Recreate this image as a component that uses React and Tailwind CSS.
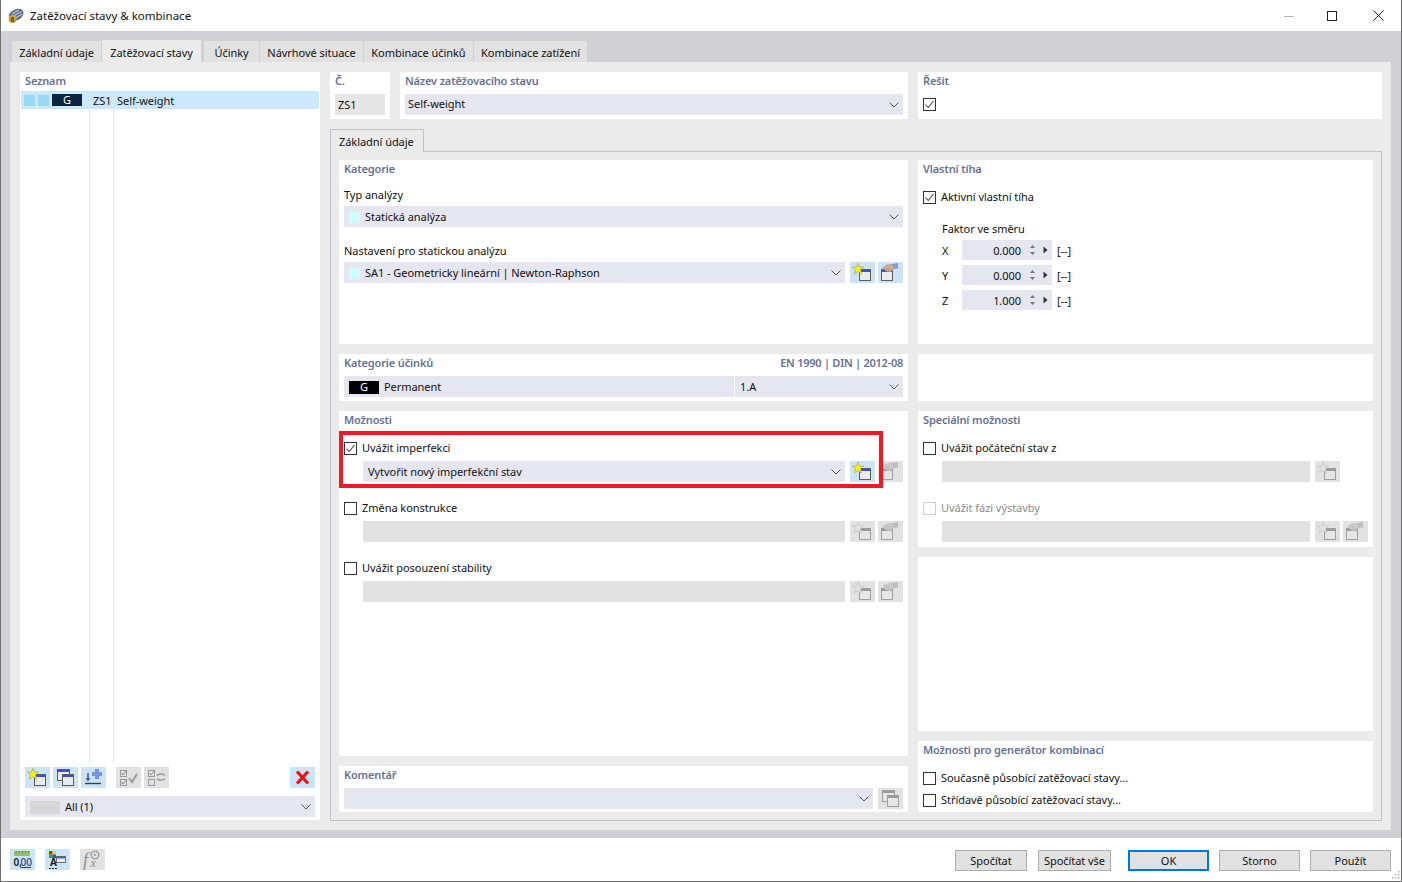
import React from "react";

const Chevron = ({ c = "#555" }) => (
  <svg width="10" height="6" viewBox="0 0 10 6" className="shrink-0"><path d="M0.5 0.5 L5 5 L9.5 0.5" fill="none" stroke={c} strokeWidth="1" /></svg>
);

const Star = ({ x = 8, y = 7 }) => (
  <polygon transform={`translate(${x} ${y}) scale(1.15)`} points="0,-5 1.4,-1.6 5,-1.6 2.2,0.7 3.2,4.4 0,2.2 -3.2,4.4 -2.2,0.7 -5,-1.6 -1.4,-1.6" fill="#fff200" stroke="#9a9a70" strokeWidth="0.5" />
);
const Win = ({ x, y, w = 11, h = 11 }) => (
  <g>
    <rect x={x + 0.5} y={y + 0.5} width={w} height={h} fill="#ebebeb" stroke="#5c5c5c" />
    <rect x={x + 1} y={y + 1} width={w - 1} height="2" fill="#3f51c4" />
  </g>
);
const NewIcon = () => (
  <svg width="25" height="21" viewBox="0 0 25 21"><Win x={9} y={7} /><Star /></svg>
);
const EditIcon = () => (
  <svg width="25" height="21" viewBox="0 0 25 21">
    <Win x={3} y={7} />
    <path d="M14 2 L20 1 L20 6.5 L15 7 Z" fill="#7aa2dc" />
    <path d="M5 5.5 C7 3.5 10 2.5 13 2.5 L16 3.5 L16 6 L14.5 8 L12.5 10 L10.5 9.5 L9.5 10 L8 8.5 L6.5 8 Z" fill="#d3ab92" stroke="#a07f6a" strokeWidth="0.5" />
    <path d="M8 6.5 L11 6 M9.5 8 L12.5 7.5" stroke="#a07f6a" strokeWidth="0.5" />
  </svg>
);
const CopyIcon = () => (
  <svg width="25" height="21" viewBox="0 0 25 21"><Win x={4} y={2} w={12} h={11} /><Win x={9} y={7} w={11} h={11} /></svg>
);
const ImportIcon = () => (
  <svg width="25" height="21" viewBox="0 0 25 21">
    <path d="M4 16.5 H20" stroke="#3a3f55" strokeWidth="1.4" />
    <path d="M7 6 V13" stroke="#3c5fc0" strokeWidth="1.6" />
    <path d="M4.5 11 L7 14.5 L9.5 11 Z" fill="#3c5fc0" />
    <path d="M14 2 H18 V5 H21 V9 H18 V12 H14 V9 H11 V5 H14 Z" fill="#7494e8" />
  </svg>
);
const CheckAllIcon = () => (
  <svg width="25" height="21" viewBox="0 0 25 21" className="opacity-80">
    <rect x="4.5" y="3.5" width="6" height="6" fill="none" stroke="#8a8a8a" />
    <rect x="4.5" y="12.5" width="6" height="6" fill="none" stroke="#8a8a8a" />
    <path d="M5.5 6 L7 8 L11 3 M5.5 15 L7 17 L11 12" fill="none" stroke="#777" />
    <path d="M13 11 L16 15 L21 7" fill="none" stroke="#8a8a8a" strokeWidth="2" />
  </svg>
);
const CheckSwapIcon = () => (
  <svg width="25" height="21" viewBox="0 0 25 21" className="opacity-80">
    <rect x="4.5" y="3.5" width="6" height="6" fill="none" stroke="#8a8a8a" />
    <rect x="4.5" y="12.5" width="6" height="6" fill="none" stroke="#8a8a8a" />
    <path d="M5.5 6 L7 8 L11 3" fill="none" stroke="#777" />
    <path d="M13 9 C15 6 18 6 21 8.5 M13 12 C16 14 18 14 21 11.5" fill="none" stroke="#8a8a8a" strokeWidth="1.6" />
  </svg>
);
const XIcon = () => (
  <svg width="25" height="21" viewBox="0 0 25 21"><path d="M7 4.5 L18 16.5 M18 4.5 L7 16.5" stroke="#ee1111" strokeWidth="3.2" /></svg>
);
const RulerIcon = () => (
  <svg width="25" height="21" viewBox="0 0 25 21">
    <rect x="4" y="2" width="16" height="5" fill="#93c063" />
    <path d="M6.5 2V4M9.5 2V4M12.5 2V4M15.5 2V4M18.5 2V4" stroke="#6f9c4c" />
    <text x="3.5" y="16.5" fontSize="10" fontWeight="600" fill="#222" fontFamily="Noto Sans, sans-serif">0,</text>
    <text x="10.5" y="16.5" fontSize="10" fontWeight="500" fill="#2a3a90" fontFamily="Noto Sans, sans-serif">00</text>
    <path d="M10.5 18.5H21" stroke="#2a3a90" />
  </svg>
);
const ColorIcon = () => (
  <svg width="25" height="21" viewBox="0 0 25 21">
    <rect x="4" y="2" width="3.5" height="3.5" fill="#e02020" />
    <rect x="7.5" y="2" width="3.5" height="3.5" fill="#e6d820" />
    <rect x="4" y="5.5" width="3.5" height="3.5" fill="#30a040" />
    <rect x="7.5" y="5.5" width="3.5" height="3.5" fill="#3050d0" />
    <text x="5" y="17" fontSize="10" fontWeight="700" fill="#222" fontFamily="Noto Sans, sans-serif">A</text>
    <path d="M4 19.5H6M7 19.5H9M10 19.5H12" stroke="#222" />
    <rect x="11.5" y="7.5" width="9" height="6" fill="#eee" stroke="#667" />
    <rect x="12" y="8" width="8" height="1.5" fill="#4a60c8" />
  </svg>
);
const FxIcon = () => (
  <svg width="25" height="21" viewBox="0 0 25 21">
    <text x="3" y="17" fontSize="18" fontStyle="italic" fill="#8f8f8f" fontFamily="Liberation Serif, serif">f</text>
    <text x="10.5" y="18" fontSize="12" fontStyle="italic" fill="#8f8f8f" fontFamily="Liberation Serif, serif">x</text>
    <circle cx="15" cy="6" r="3.8" fill="none" stroke="#8f8f8f" strokeWidth="1.4" strokeDasharray="2 0.6" />
    <circle cx="15" cy="6" r="1" fill="#8f8f8f" />
  </svg>
);
const AppIcon = () => (
  <svg width="16" height="16" viewBox="0 0 16 16" className="shrink-0">
    <path d="M1 7 C2 4 6 1.5 10 0.8 C13 0.5 15.5 2 15.5 5 C15.5 8 13 10.5 10 12 L5 13 C2 12.5 0.5 10 1 7 Z" fill="#5a6a80" />
    <path d="M4 6 L11 2 M5.5 8 L13.5 3.5 M7.5 10 L14.5 6" stroke="#c3cedd" strokeWidth="1.1" />
    <circle cx="4.5" cy="11" r="4" fill="#d8aa2e" />
    <text x="2.6" y="13.6" fontSize="7" fontWeight="700" fill="#4a3a10" fontFamily="Liberation Sans, sans-serif">6</text>
  </svg>
);

const Btn = ({ children, off, cls = "" }) => (
  <div className={`w-[25px] h-[21px] shrink-0 flex items-center justify-center ${off ? "bg-[#e2e2e2]" : "bg-[#cce4f7]"} ${cls}`}>
    <div className={off ? "grayscale opacity-50 flex" : "flex"}>{children}</div>
  </div>
);

const Combo = ({ children, cls = "", off }) => (
  <div className={`h-[21px] flex items-center ${off ? "bg-[#e2e2e2]" : "bg-[#e6e6f0]"} ${cls}`}>
    <div className="flex-1 min-w-0 flex items-center h-full pt-px">{children}</div>
    {!off && <div className="w-[21px] flex justify-start pl-[7px]"><Chevron /></div>}
  </div>
);

const Title = ({ children, right }) => (
  <div className="h-[18px] leading-[18px] px-[5px] flex justify-between text-[#667097] font-semibold tracking-[-0.15px]">
    <span>{children}</span>
    {right && <span className="tracking-[-0.25px]">{right}</span>}
  </div>
);

const Check = ({ checked, off }) => (
  <div className={`w-[13px] h-[13px] border shrink-0 flex items-center justify-center bg-white ${off ? "border-[#cfcfcf]" : "border-[#333]"}`}>
    {checked && <svg width="11" height="11" viewBox="0 0 11 11"><path d="M1.5 5.5 L4.2 8.5 L9.5 2" fill="none" stroke="#444" strokeWidth="1.1" /></svg>}
  </div>
);

const CheckRow = ({ children, checked, off, cls = "" }) => (
  <div className={`h-[16px] flex items-center gap-[5px] pl-[5px] ${cls}`}>
    <Check checked={checked} off={off} />
    <span className={off ? "text-[#8c8c8c]" : ""}>{children}</span>
  </div>
);

const Spin = ({ axis, value }) => (
  <div className="flex items-center h-[20px] pl-[24px]">
    <span className="w-[20px] pt-[2px]">{axis}</span>
    <div className="w-[90px] h-[20px] bg-[#e6e6f0] flex items-center justify-end">
      <span className="mr-[8px] pt-[2px]">{value}</span>
      <svg width="7" height="12" viewBox="0 0 7 12" className="mr-[7px]"><path d="M3.5 1 L6 4 H1 Z M3.5 11 L1 8 H6 Z" fill="#777" /></svg>
      <svg width="5" height="8" viewBox="0 0 5 8" className="mr-[4px]"><path d="M0.5 0.5 L4.5 4 L0.5 7.5 Z" fill="#333" /></svg>
    </div>
    <span className="ml-[5px] pt-[2px]">[--]</span>
  </div>
);

const Tab = ({ children, w, active }) => (
  <div className={`text-center ${w} ${active ? "h-[22px] bg-[#ebebeb] leading-[26px]" : "h-[21px] bg-[#e1e1e1] leading-[24px] border-r border-[#d0d0d4]"}`}>{children}</div>
);

const FootBtn = ({ children, w, cls = "", primary }) => (
  <div className={`${w} h-[21px] flex items-center justify-center pt-px bg-[#e1e1e1] ${primary ? "border-2 border-[#0078d7]" : "border border-[#adadad]"} ${cls}`}>{children}</div>
);

export default function App() {
  return (
    <div className="w-[1402px] h-[882px] flex flex-col bg-white border-l border-r border-b border-[#6e6e6e] relative overflow-hidden text-[#111] text-[11px] tracking-[-0.05px] [font-family:'Noto_Sans',sans-serif]">
      {/* Title bar */}
      <div className="h-[31px] shrink-0 flex items-center pl-[7px]">
        <AppIcon />
        <span className="ml-[6px] text-[11.5px] tracking-[0px]">Zatěžovací stavy &amp; kombinace</span>
        <div className="ml-auto flex items-center">
          <svg width="10" height="10" viewBox="0 0 10 10" className="mr-[33px]"><path d="M0 5.5H10" stroke="#b5b5b5" /></svg>
          <svg width="10" height="10" viewBox="0 0 10 10" className="mr-[36px]"><rect x="0.5" y="0.5" width="9" height="9" fill="none" stroke="#222" /></svg>
          <svg width="11" height="11" viewBox="0 0 11 11" className="mr-[17px]"><path d="M0.5 0.5 L10.5 10.5 M10.5 0.5 L0.5 10.5" stroke="#222" /></svg>
        </div>
      </div>

      {/* Band */}
      <div className="h-[807px] shrink-0 bg-[#d1d1d5] pt-[9px] pb-[8px] pl-[9px] pr-[10px] flex flex-col">
        <div className="h-[22px] shrink-0 flex items-end pl-[2px]">
          <Tab w="w-[90px]">Základní údaje</Tab>
          <Tab w="w-[99px]" active>Zatěžovací stavy</Tab>
          <div className="w-[3px]" />
          <Tab w="w-[56px]">Účinky</Tab>
          <Tab w="w-[104px]">Návrhové situace</Tab>
          <Tab w="w-[110px]">Kombinace účinků</Tab>
          <Tab w="w-[114px]">Kombinace zatížení</Tab>
        </div>
        <div className="h-[768px] shrink-0 bg-[#ebebeb] pt-[10px] pl-[10px] pr-[9px] flex gap-[10px]">
          {/* Left list */}
          <div className="w-[300px] h-[748px] bg-white flex flex-col">
            <Title>Seznam</Title>
            <div className="flex-1 mt-px mx-px flex flex-col">
              <div className="h-[18px] bg-[#cce8ff] flex items-center shrink-0">
                <div className="w-[69px] h-full flex items-center pl-[3px] gap-[3px] border-r border-[#e0eaf2]">
                  <div className="w-[11px] h-[11px] bg-[#99d9f5]" />
                  <div className="w-[11px] h-[11px] bg-[#99d9f5]" />
                  <div className="w-[30px] h-[12px] bg-[#0b2640] text-white flex items-center justify-center">G</div>
                </div>
                <div className="w-[24px] h-full flex items-center pt-[2px] pl-[3px] border-r border-[#e0eaf2]">ZS1</div>
                <div className="pl-[3px] pt-[2px]">Self-weight</div>
              </div>
              <div className="flex-1 flex">
                <div className="w-[69px] border-r border-[#e4e4e4]" />
                <div className="w-[24px] border-r border-[#e4e4e4]" />
              </div>
            </div>
            <div className="mt-[5px] px-[5px] flex">
              <Btn><NewIcon /></Btn>
              <Btn cls="ml-[3px]"><CopyIcon /></Btn>
              <Btn cls="ml-[3px]"><ImportIcon /></Btn>
              <div className="ml-[10px] w-[25px] h-[21px] bg-[#e2e2e2] flex items-center justify-center"><CheckAllIcon /></div>
              <div className="ml-[3px] w-[25px] h-[21px] bg-[#e2e2e2] flex items-center justify-center"><CheckSwapIcon /></div>
              <Btn cls="ml-auto"><XIcon /></Btn>
            </div>
            <div className="mt-[8px] mb-[3px] px-[5px]">
              <Combo>
                <div className="w-[30px] h-[13px] bg-[#d6d6d6] ml-[5px] mr-[5px]" />
                All (1)
              </Combo>
            </div>
          </div>

          {/* Right */}
          <div className="w-[1052px] flex flex-col">
            <div className="h-[47px] shrink-0 flex gap-[10px]">
              <div className="w-[60px] bg-white">
                <Title>Č.</Title>
                <div className="mt-[4px] ml-[5px] w-[50px] h-[21px] bg-[#e6e6e6] flex items-center pt-px pl-[3px]">ZS1</div>
              </div>
              <div className="w-[508px] bg-white">
                <Title>Název zatěžovacího stavu</Title>
                <div className="mt-[4px] mx-[5px]"><Combo><span className="pl-[3px] -mt-px">Self-weight</span></Combo></div>
              </div>
              <div className="flex-1 bg-white">
                <Title>Řešit</Title>
                <div className="mt-[8px] pl-[5px]"><Check checked /></div>
              </div>
            </div>

            <div className="mt-[10px] w-[94px] h-[23px] relative z-10 -mb-px bg-[#ebebeb] border border-b-0 border-[#c3c3cc] flex items-center pt-[2px] pl-[8px]">Základní údaje</div>
            <div className="h-[670px] shrink-0 border border-[#c3c3cc] pt-[8px] pl-[8px] pr-[8px] grid grid-cols-[569px_455px] gap-[10px]">
              {/* Column 1 */}
              <div className="flex flex-col gap-[10px]">
                <div className="h-[184px] bg-white">
                  <Title>Kategorie</Title>
                  <div className="mt-[9px] h-[16px] leading-[16px] px-[5px]">Typ analýzy</div>
                  <div className="mt-[3px] px-[5px]">
                    <Combo><div className="w-[11px] h-[11px] bg-[#ccffff] ml-[5px] mr-[5px]" />Statická analýza</Combo>
                  </div>
                  <div className="mt-[16px] h-[16px] leading-[16px] px-[5px]">Nastavení pro statickou analýzu</div>
                  <div className="mt-[3px] px-[5px] flex gap-[5px]">
                    <Combo cls="flex-1"><div className="w-[11px] h-[11px] bg-[#ccffff] ml-[5px] mr-[5px]" />SA1 - Geometricky lineární | Newton-Raphson</Combo>
                    <Btn><NewIcon /></Btn>
                    <Btn cls="-ml-[2px]"><EditIcon /></Btn>
                  </div>
                </div>

                <div className="h-[47px] bg-white">
                  <Title right="EN 1990 | DIN | 2012-08">Kategorie účinků</Title>
                  <div className="mt-[4px] px-[5px]">
                    <Combo>
                      <div className="w-[30px] h-[13px] bg-black text-white flex items-center justify-center ml-[5px]">G</div>
                      <span className="ml-[5px] w-[350px]">Permanent</span>
                      <div className="w-px h-full bg-white" />
                      <span className="ml-[5px]">1.A</span>
                    </Combo>
                  </div>
                </div>

                <div className="h-[345px] bg-white">
                  <Title>Možnosti</Title>
                  <CheckRow checked cls="mt-[11px]">Uvážit imperfekci</CheckRow>
                  <div className="mt-[5px] pl-[24px] pr-[5px] flex gap-[5px]">
                    <Combo cls="flex-1"><span className="pl-[5px]">Vytvořit nový imperfekční stav</span></Combo>
                    <Btn><NewIcon /></Btn>
                    <Btn off cls="-ml-[2px]"><EditIcon /></Btn>
                  </div>
                  <CheckRow cls="mt-[18px]">Změna konstrukce</CheckRow>
                  <div className="mt-[5px] pl-[24px] pr-[5px] flex gap-[5px]">
                    <Combo off cls="flex-1" />
                    <Btn off><NewIcon /></Btn>
                    <Btn off cls="-ml-[2px]"><EditIcon /></Btn>
                  </div>
                  <CheckRow cls="mt-[18px]">Uvážit posouzení stability</CheckRow>
                  <div className="mt-[5px] pl-[24px] pr-[5px] flex gap-[5px]">
                    <Combo off cls="flex-1" />
                    <Btn off><NewIcon /></Btn>
                    <Btn off cls="-ml-[2px]"><EditIcon /></Btn>
                  </div>
                </div>

                <div className="h-[46px] bg-white">
                  <Title>Komentář</Title>
                  <div className="mt-[4px] px-[5px] flex gap-[5px]">
                    <Combo cls="flex-1" />
                    <Btn off><CopyIcon /></Btn>
                  </div>
                </div>
              </div>

              {/* Column 2 */}
              <div className="flex flex-col gap-[10px]">
                <div className="h-[184px] bg-white">
                  <Title>Vlastní tíha</Title>
                  <CheckRow checked cls="mt-[11px]">Aktivní vlastní tíha</CheckRow>
                  <div className="mt-[16px] h-[16px] leading-[16px] pl-[24px]">Faktor ve směru</div>
                  <div className="mt-[3px] flex flex-col gap-[5px]">
                    <Spin axis="X" value="0.000" />
                    <Spin axis="Y" value="0.000" />
                    <Spin axis="Z" value="1.000" />
                  </div>
                </div>
                <div className="h-[47px] bg-white" />
                <div className="h-[136px] bg-white">
                  <Title>Speciální možnosti</Title>
                  <CheckRow cls="mt-[11px]">Uvážit počáteční stav z</CheckRow>
                  <div className="mt-[5px] pl-[24px] flex gap-[5px]">
                    <Combo off cls="w-[368px]" />
                    <Btn off><NewIcon /></Btn>
                  </div>
                  <CheckRow off cls="mt-[18px]">Uvážit fázi výstavby</CheckRow>
                  <div className="mt-[5px] pl-[24px] flex gap-[5px]">
                    <Combo off cls="w-[368px]" />
                    <Btn off><NewIcon /></Btn>
                    <Btn off cls="-ml-[2px]"><EditIcon /></Btn>
                  </div>
                </div>
                <div className="h-[174px] bg-white" />
                <div className="h-[71px] bg-white">
                  <Title>Možnosti pro generátor kombinací</Title>
                  <CheckRow cls="mt-[11px]">Současně působící zatěžovací stavy...</CheckRow>
                  <CheckRow cls="mt-[6px]">Střídavě působící zatěžovací stavy...</CheckRow>
                </div>
              </div>
            </div>
          </div>
        </div>
      </div>

      {/* Footer */}
      <div className="flex-1 flex items-start pt-[11px] pl-[9px] pr-[10px] relative">
        <Btn><RulerIcon /></Btn>
        <Btn cls="ml-[10px]"><ColorIcon /></Btn>
        <div className="ml-[10px] w-[25px] h-[21px] bg-[#e2e2e2] flex items-center justify-center"><FxIcon /></div>
        <div className="ml-auto mt-px flex">
          <FootBtn w="w-[72px]">Spočítat</FootBtn>
          <FootBtn w="w-[73px]" cls="ml-[11px]">Spočítat vše</FootBtn>
          <FootBtn w="w-[81px]" cls="ml-[17px]" primary>OK</FootBtn>
          <FootBtn w="w-[81px]" cls="ml-[10px]">Storno</FootBtn>
          <FootBtn w="w-[81px]" cls="ml-[10px]">Použít</FootBtn>
        </div>
        <svg width="10" height="10" viewBox="0 0 10 10" className="absolute right-[1px] bottom-[1px]">
          <path d="M8 1h1.5v1.5H8zM5 4h1.5v1.5H5zM8 4h1.5v1.5H8zM2 7h1.5v1.5H2zM5 7h1.5v1.5H5zM8 7h1.5v1.5H8z" fill="#b0b0b0" />
        </svg>
      </div>

      {/* Annotation frame */}
      <div className="absolute left-[338px] top-[431px] w-[544px] h-[57px] border-4 border-[#ed1c24] pointer-events-none z-20" />
    </div>
  );
}
